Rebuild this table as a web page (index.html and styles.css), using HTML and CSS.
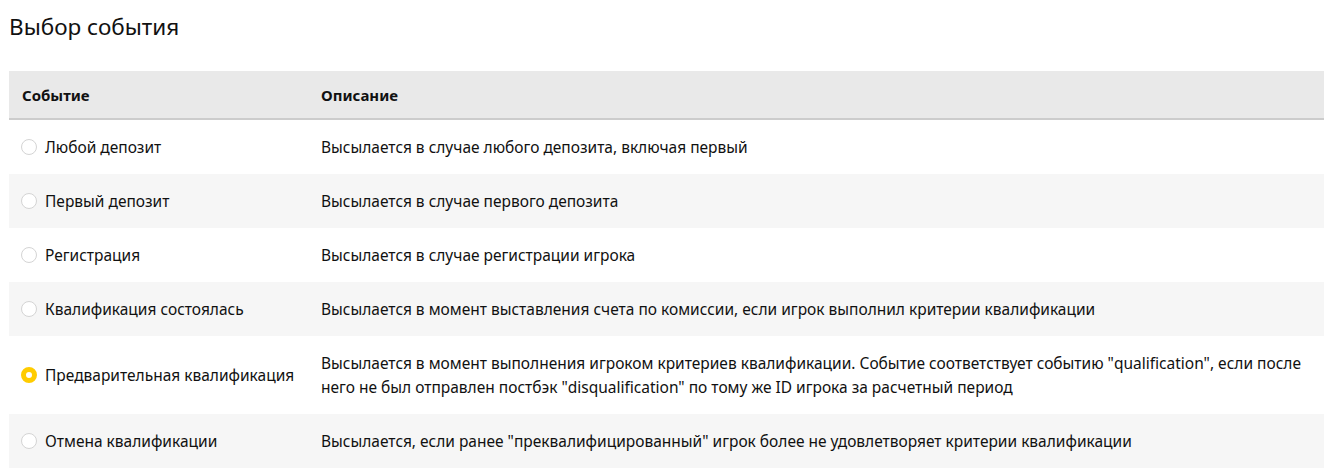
FILE: index.html
```html
<!DOCTYPE html>
<html lang="ru">
<head>
<meta charset="utf-8">
<link rel="stylesheet" href="styles.css">
</head>
<body>
<div class="page">
  <h1 class="title">Выбор события</h1>
  <table class="events">
    <thead>
      <tr><th class="col-event">Событие</th><th>Описание</th></tr>
    </thead>
    <tbody>
      <tr>
        <td><label class="radio"><span class="dot"></span>Любой депозит</label></td>
        <td>Высылается в случае любого депозита, включая первый</td>
      </tr>
      <tr>
        <td><label class="radio"><span class="dot"></span>Первый депозит</label></td>
        <td>Высылается в случае первого депозита</td>
      </tr>
      <tr>
        <td><label class="radio"><span class="dot"></span>Регистрация</label></td>
        <td>Высылается в случае регистрации игрока</td>
      </tr>
      <tr>
        <td><label class="radio"><span class="dot"></span>Квалификация состоялась</label></td>
        <td>Высылается в момент выставления счета по комиссии, если игрок выполнил критерии квалификации</td>
      </tr>
      <tr>
        <td><label class="radio"><span class="dot checked"></span>Предварительная квалификация</label></td>
        <td>Высылается в момент выполнения игроком критериев квалификации. Событие соответствует событию "qualification", если после него не был отправлен постбэк "disqualification" по тому же ID игрока за расчетный период</td>
      </tr>
      <tr>
        <td><label class="radio"><span class="dot"></span>Отмена квалификации</label></td>
        <td>Высылается, если ранее "преквалифицированный" игрок более не удовлетворяет критерии квалификации</td>
      </tr>
    </tbody>
  </table>
</div>
</body>
</html>
```
FILE: styles.css
```css
html, body {
  margin: 0;
  padding: 0;
  background: #fff;
  overflow: hidden;
}
body {
  font-family: "Noto Sans", sans-serif;
  color: #111;
}
.page {
  padding: 0 0 0 9px;
  width: 1340px;
}
.title {
  margin: 0;
  padding-top: 12px;
  height: 71px;
  box-sizing: border-box;
  font-size: 22.5px;
  font-weight: 400;
  line-height: 30px;
}
.events {
  width: 100%;
  border-collapse: collapse;
  font-size: 15.5px;
  line-height: 24px;
}
.events th {
  background: #e9e9e9;
  border-bottom: 2px solid #cccccc;
  text-align: left;
  font-weight: 700;
  font-size: 15px;
  height: 47px;
  padding: 0 13px;
}
.events .col-event {
  width: 273px;
}
.events td {
  padding: 15px 13px;
  vertical-align: middle;
}
.events tbody tr:nth-child(even) td {
  background: #f6f6f6;
}
.radio {
  display: flex;
  align-items: center;
  gap: 8px;
  margin-left: -1px;
}
.dot {
  width: 16px;
  height: 16px;
  border: 1px solid #d4d4d4;
  border-radius: 50%;
  background: #fff;
  flex: none;
  box-sizing: border-box;
}
.dot.checked {
  border: 5px solid #ffcc00;
  background: #fff;
}
```
